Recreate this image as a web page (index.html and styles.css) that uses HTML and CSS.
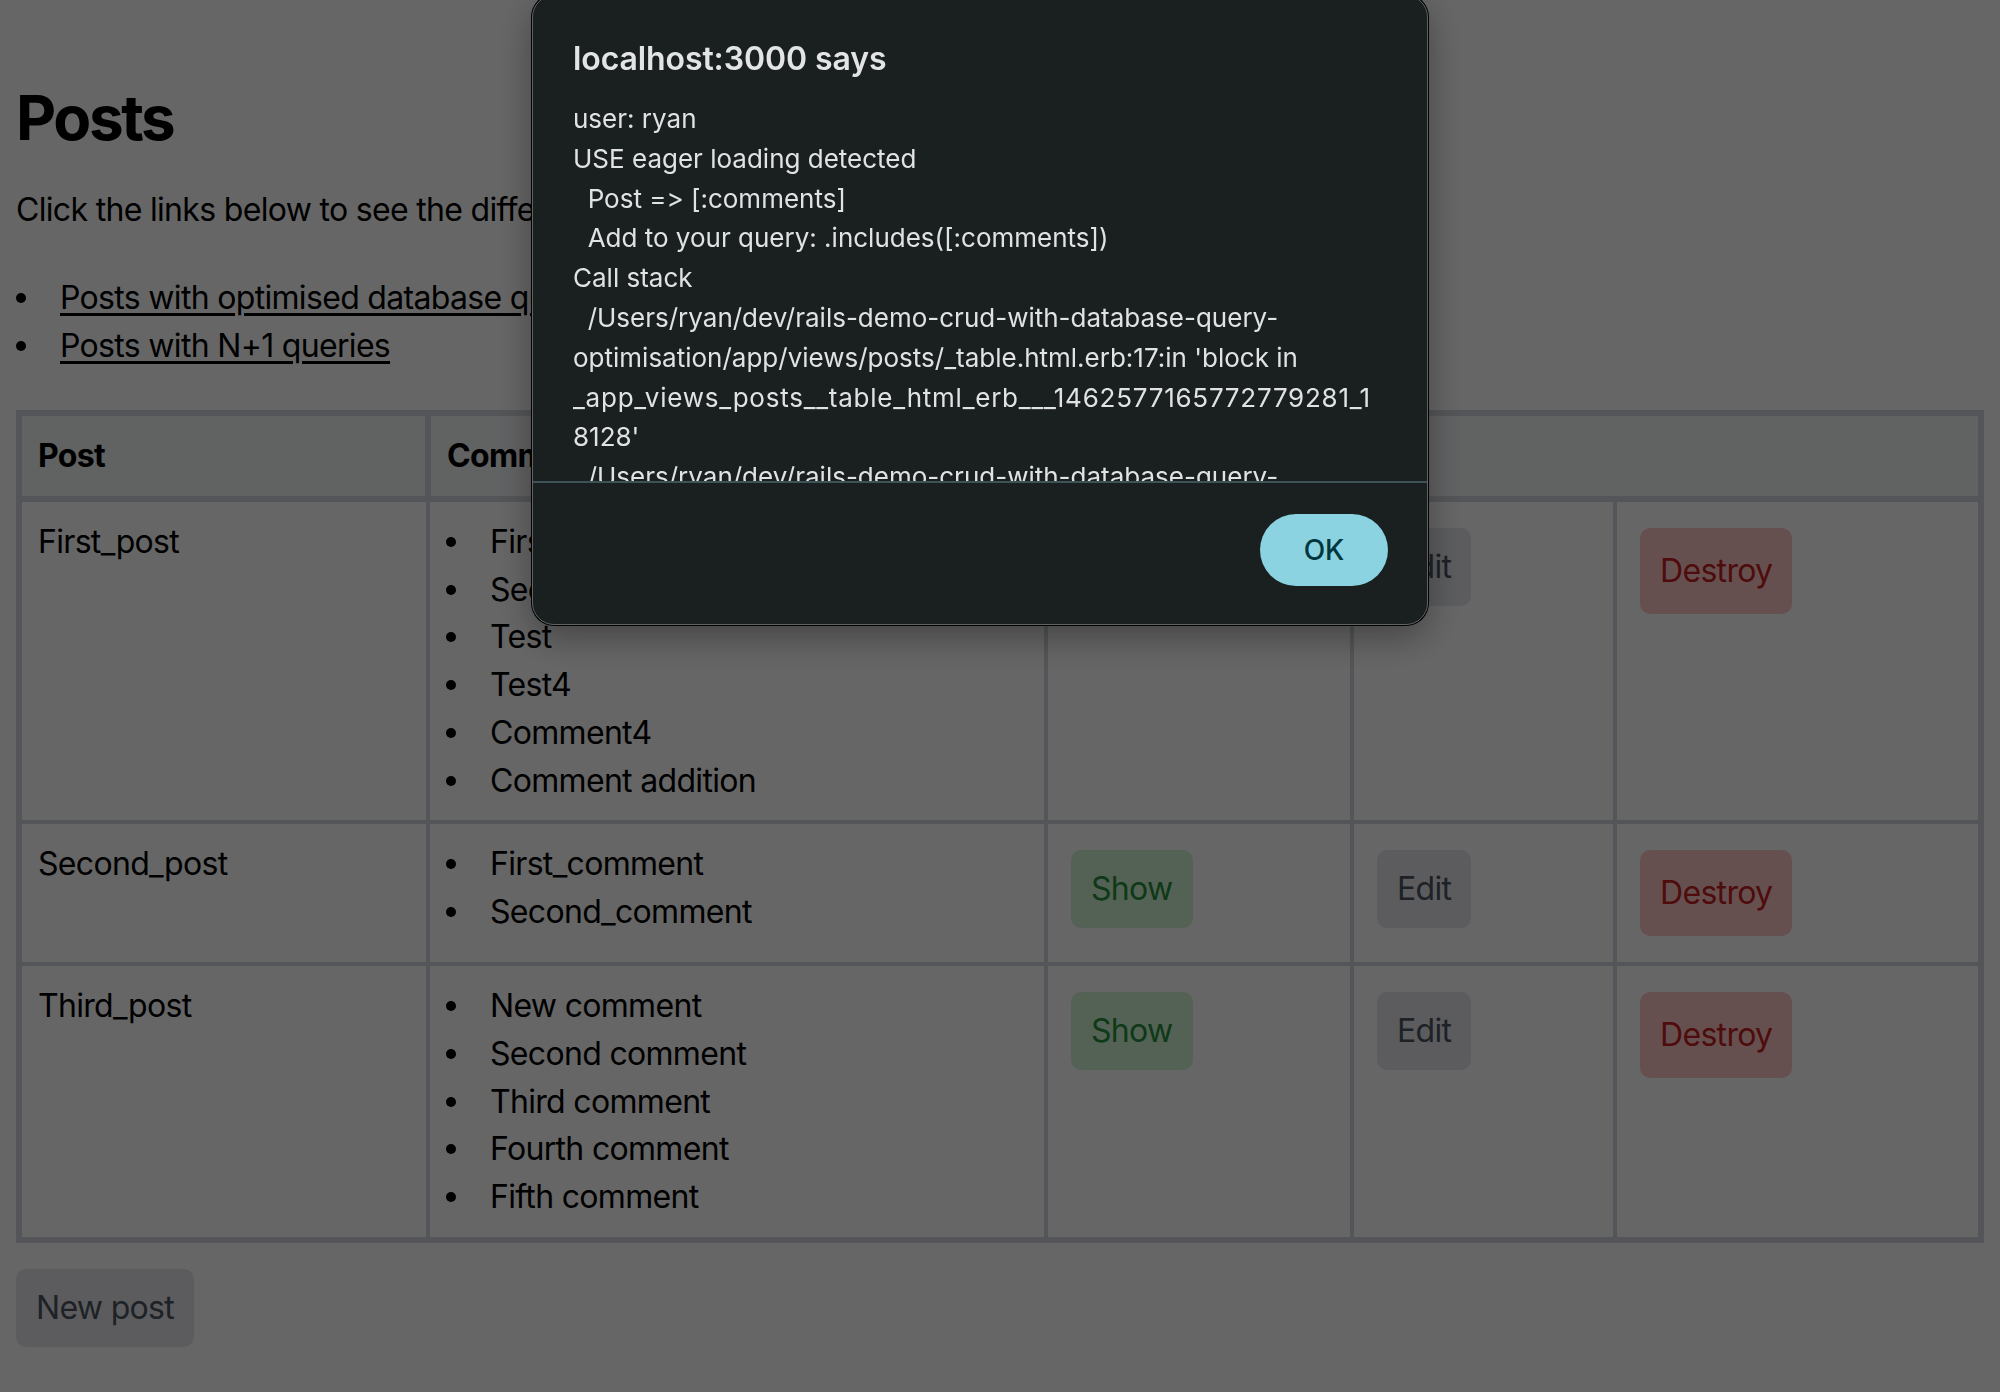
FILE: index.html
```html
<!DOCTYPE html>
<html lang="en">
<head>
<meta charset="utf-8">
<title>Posts</title>
<link rel="stylesheet" href="styles.css">
</head>
<body>
<main class="page">
  <h1 class="title">Posts</h1>
  <p class="intro">Click the links below to see the difference in the number of database queries.</p>
  <ul class="links">
    <li><a href="#">Posts with optimised database queries</a></li>
    <li><a href="#">Posts with N+1 queries</a></li>
  </ul>
  <table class="posts">
    <colgroup>
      <col class="c-post"><col class="c-comments"><col class="c-show"><col class="c-edit"><col class="c-destroy">
    </colgroup>
    <thead>
      <tr><th>Post</th><th>Comments</th><th colspan="3"></th></tr>
    </thead>
    <tbody>
      <tr>
        <td>First_post</td>
        <td><ul class="comments"><li>First_comment</li><li>Second_comment</li><li>Test</li><li>Test4</li><li>Comment4</li><li>Comment addition</li></ul></td>
        <td><a class="btn btn-show" href="#">Show</a></td>
        <td><a class="btn btn-edit" href="#">Edit</a></td>
        <td><form class="inline-form"><button class="btn btn-destroy" type="button">Destroy</button></form></td>
      </tr>
      <tr>
        <td>Second_post</td>
        <td><ul class="comments"><li>First_comment</li><li>Second_comment</li></ul></td>
        <td><a class="btn btn-show" href="#">Show</a></td>
        <td><a class="btn btn-edit" href="#">Edit</a></td>
        <td><form class="inline-form"><button class="btn btn-destroy" type="button">Destroy</button></form></td>
      </tr>
      <tr>
        <td>Third_post</td>
        <td><ul class="comments"><li>New comment</li><li>Second comment</li><li>Third comment</li><li>Fourth comment</li><li>Fifth comment</li></ul></td>
        <td><a class="btn btn-show" href="#">Show</a></td>
        <td><a class="btn btn-edit" href="#">Edit</a></td>
        <td><form class="inline-form"><button class="btn btn-destroy" type="button">Destroy</button></form></td>
      </tr>
    </tbody>
  </table>
  <a class="btn btn-edit btn-new" href="#">New post</a>
</main>
<div class="backdrop"></div>
<div class="dialog" role="alertdialog" aria-labelledby="dlg-title">
  <div class="dialog-body">
    <h2 class="dialog-title" id="dlg-title">localhost:3000 says</h2>
    <div class="dialog-message">user: ryan
USE eager loading detected
  Post =&gt; [:comments]
  Add to your query: .includes([:comments])
Call stack
  /Users/ryan/dev/rails-demo-crud-with-database-query-optimisation/app/views/posts/_table.html.erb:17:in 'block in <span class="token">_app_views_posts__table_html_erb___1462577165772779281_1</span>
8128'
  /Users/ryan/dev/rails-demo-crud-with-database-query-optimisation/app/views/posts/_table.html.erb:14:in 'each'</div>
  </div>
  <div class="dialog-footer">
    <button class="dialog-ok" type="button">OK</button>
  </div>
</div>
</body>
</html>
```

FILE: styles.css
```css
* { box-sizing: border-box; }

html, body { margin: 0; }

body {
  font-family: Inter, "Noto Sans", sans-serif;
  font-size: 32px;
  line-height: 48px;
  letter-spacing: -0.68px;
  color: #000;
  background: #fff;
}

.page {
  padding: 0 16px 40px;
}

.title {
  font-size: 62px;
  line-height: 77px;
  font-weight: 700;
  letter-spacing: -2.4px;
  margin: 79px 0 30px;
}

.intro {
  margin: 0 0 40px;
}

.links,
.comments {
  list-style: none;
  margin: 0;
  padding-left: 44px;
}

.links {
  margin-bottom: 40px;
}

.links li,
.comments li {
  display: flex;
}

.links li::before,
.comments li::before {
  content: "";
  flex: none;
  width: 10px;
  height: 10px;
  margin: 19px 34px 0 -44px;
  border-radius: 50%;
  background: #000;
}

.links a {
  color: #000;
  text-decoration: underline;
  text-underline-offset: 4px;
}

.posts {
  width: 100%;
  border-collapse: collapse;
  table-layout: fixed;
  border: 6px solid #d1d5db;
}

.c-post { width: 409px; }
.c-comments { width: 618px; }
.c-show { width: 306px; }
.c-edit { width: 263px; }

.posts th {
  text-align: left;
  font-weight: 700;
  background: #f3f4f6;
  padding: 16px;
  border: 6px solid #d1d5db;
  vertical-align: top;
}

.posts td {
  padding: 16px;
  border: 4px solid #d1d5db;
  vertical-align: top;
}

.comments li {
  line-height: 47.7px;
}

.inline-form { margin: 0; }

.btn {
  display: block;
  width: fit-content;
  margin: 10px 0 10px 7px;
  padding: 20px 20px;
  border: 0;
  border-radius: 10px;
  font: inherit;
  letter-spacing: inherit;
  line-height: 38px;
  text-decoration: none;
}

.btn-show { background: #cff6d4; color: #268e3d; }
.btn-edit { background: #e5e7eb; color: #4b5563; }
.btn-destroy { background: #fec8c6; color: #c41f1f; padding: 24px 20px; }

.btn-new {
  margin: 26px 0 0;
}

.backdrop {
  position: fixed;
  inset: 0;
  background: rgba(0, 0, 0, 0.6);
}

.dialog {
  position: fixed;
  left: 532px;
  top: -5px;
  width: 896px;
  height: 630px;
  display: flex;
  flex-direction: column;
  background: #1a1f20;
  color: #e1e3e3;
  border: 1px solid #5e6365;
  border-radius: 22px;
  box-shadow: 0 0 0 1px #000, 0 12px 36px rgba(0, 0, 0, 0.35);
  overflow: hidden;
  letter-spacing: 0;
  font-feature-settings: "calt" 0, "liga" 0;
}

.dialog-body {
  height: 485px;
  padding: 43px 40px 0;
  overflow: hidden;
}

.dialog-title {
  margin: 0;
  font-size: 32px;
  line-height: 40px;
  font-weight: 600;
  letter-spacing: -0.1px;
  color: #e3e5e5;
}

.dialog-message {
  margin-top: 20px;
  font-size: 26px;
  line-height: 39.8px;
  white-space: pre-wrap;
  overflow-wrap: anywhere;
}

.token {
  letter-spacing: 0.75px;
}

.dialog-footer {
  flex: 1;
  display: flex;
  justify-content: flex-end;
  align-items: flex-start;
  padding: 31px 39px 0;
  border-top: 2px solid #3f5259;
}

.dialog-ok {
  width: 128px;
  height: 72px;
  border: 0;
  border-radius: 36px;
  background: #8bd3e0;
  color: #00363e;
  font-family: Inter, "Noto Sans", sans-serif;
  font-size: 28px;
  font-weight: 500;
}
```
